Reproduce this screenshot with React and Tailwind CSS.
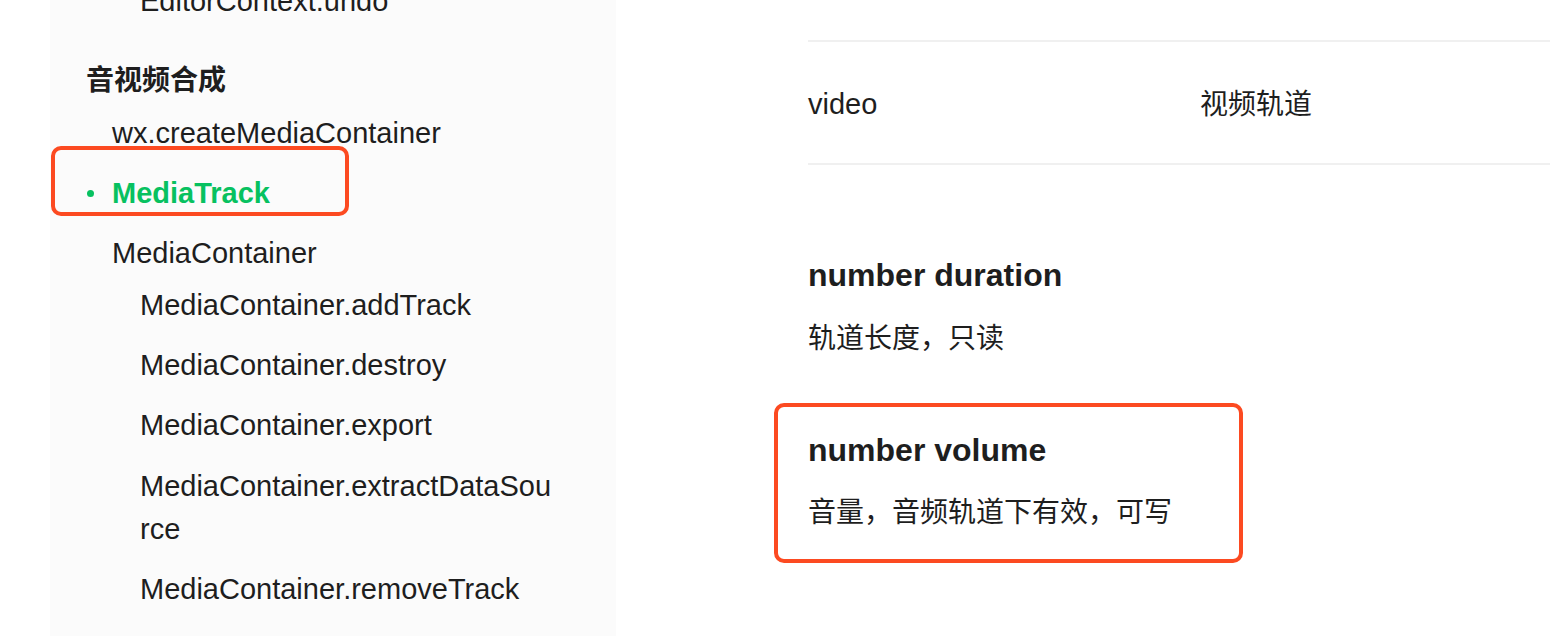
import React from 'react';

const font = { fontFamily: '"Liberation Sans", "Noto Sans CJK SC", sans-serif' };

const NavItem = ({ level = 1, children, className = '' }) => (
    <li className={(level === 2 ? 'pl-[54px] w-[471px] ' : 'pl-[26px] ') + 'text-[29px] leading-[43px] break-all ' + className}>
        {children}
    </li>
);

export default function App() {
    return (
        <div style={font} className="relative flex w-[1550px] h-[636px] overflow-hidden bg-white text-[#1e1e1e]">
            <div className="w-[50px] shrink-0" />

            {/* Sidebar */}
            <aside className="w-[566px] shrink-0 bg-[#fbfbfb] pl-[36px]">
                <ul className="-mt-[20px]">
                    <li className="pl-[54px] text-[29px] leading-[43px]">EditorContext.undo</li>
                </ul>
                <h3 className="mt-[36px] text-[28px] leading-[43px] font-bold">音视频合成</h3>
                <ul className="mt-[10px] flex flex-col">
                    <NavItem>wx.createMediaContainer</NavItem>
                    <NavItem className="mt-[17px] font-bold text-[28px] text-[#07c160]">
                        <span className="flex items-center -ml-[25px] gap-[18px]">
                            <span className="w-[7px] h-[7px] rounded-full bg-[#07c160]" />
                            MediaTrack
                        </span>
                    </NavItem>
                    <NavItem className="mt-[17px]">MediaContainer</NavItem>
                    <NavItem level={2} className="mt-[9px]">MediaContainer.addTrack</NavItem>
                    <NavItem level={2} className="mt-[17px]">MediaContainer.destroy</NavItem>
                    <NavItem level={2} className="mt-[17px]">MediaContainer.export</NavItem>
                    <NavItem level={2} className="mt-[18px]">MediaContainer.extractDataSource</NavItem>
                    <NavItem level={2} className="mt-[17px]">MediaContainer.removeTrack</NavItem>
                </ul>
            </aside>

            {/* Content */}
            <main className="flex-1 pl-[192px]">
                <div className="h-[42px] border-b-2 border-[#f0f0f0]" />
                <div className="flex items-center h-[123px] border-b-2 border-[#f0f0f0] pt-[4px]">
                    <div className="w-[392px] text-[29px]">video</div>
                    <div className="text-[28px]">视频轨道</div>
                </div>

                <h4 className="mt-[90px] text-[32px] leading-[40px] font-bold">number duration</h4>
                <p className="mt-[22px] text-[28px] leading-[43px]">轨道长度，只读</p>

                <h4 className="mt-[70px] text-[32px] leading-[40px] font-bold">number volume</h4>
                <p className="mt-[21px] text-[28px] leading-[43px]">音量，音频轨道下有效，可写</p>
            </main>

            {/* Annotation boxes */}
            <div className="absolute left-[51px] top-[146px] w-[298px] h-[70px] border-[4px] border-[#fc4a21] rounded-[10px] pointer-events-none" />
            <div className="absolute left-[774px] top-[403px] w-[469px] h-[160px] border-[4px] border-[#fc4a21] rounded-[10px] pointer-events-none" />
        </div>
    );
}
